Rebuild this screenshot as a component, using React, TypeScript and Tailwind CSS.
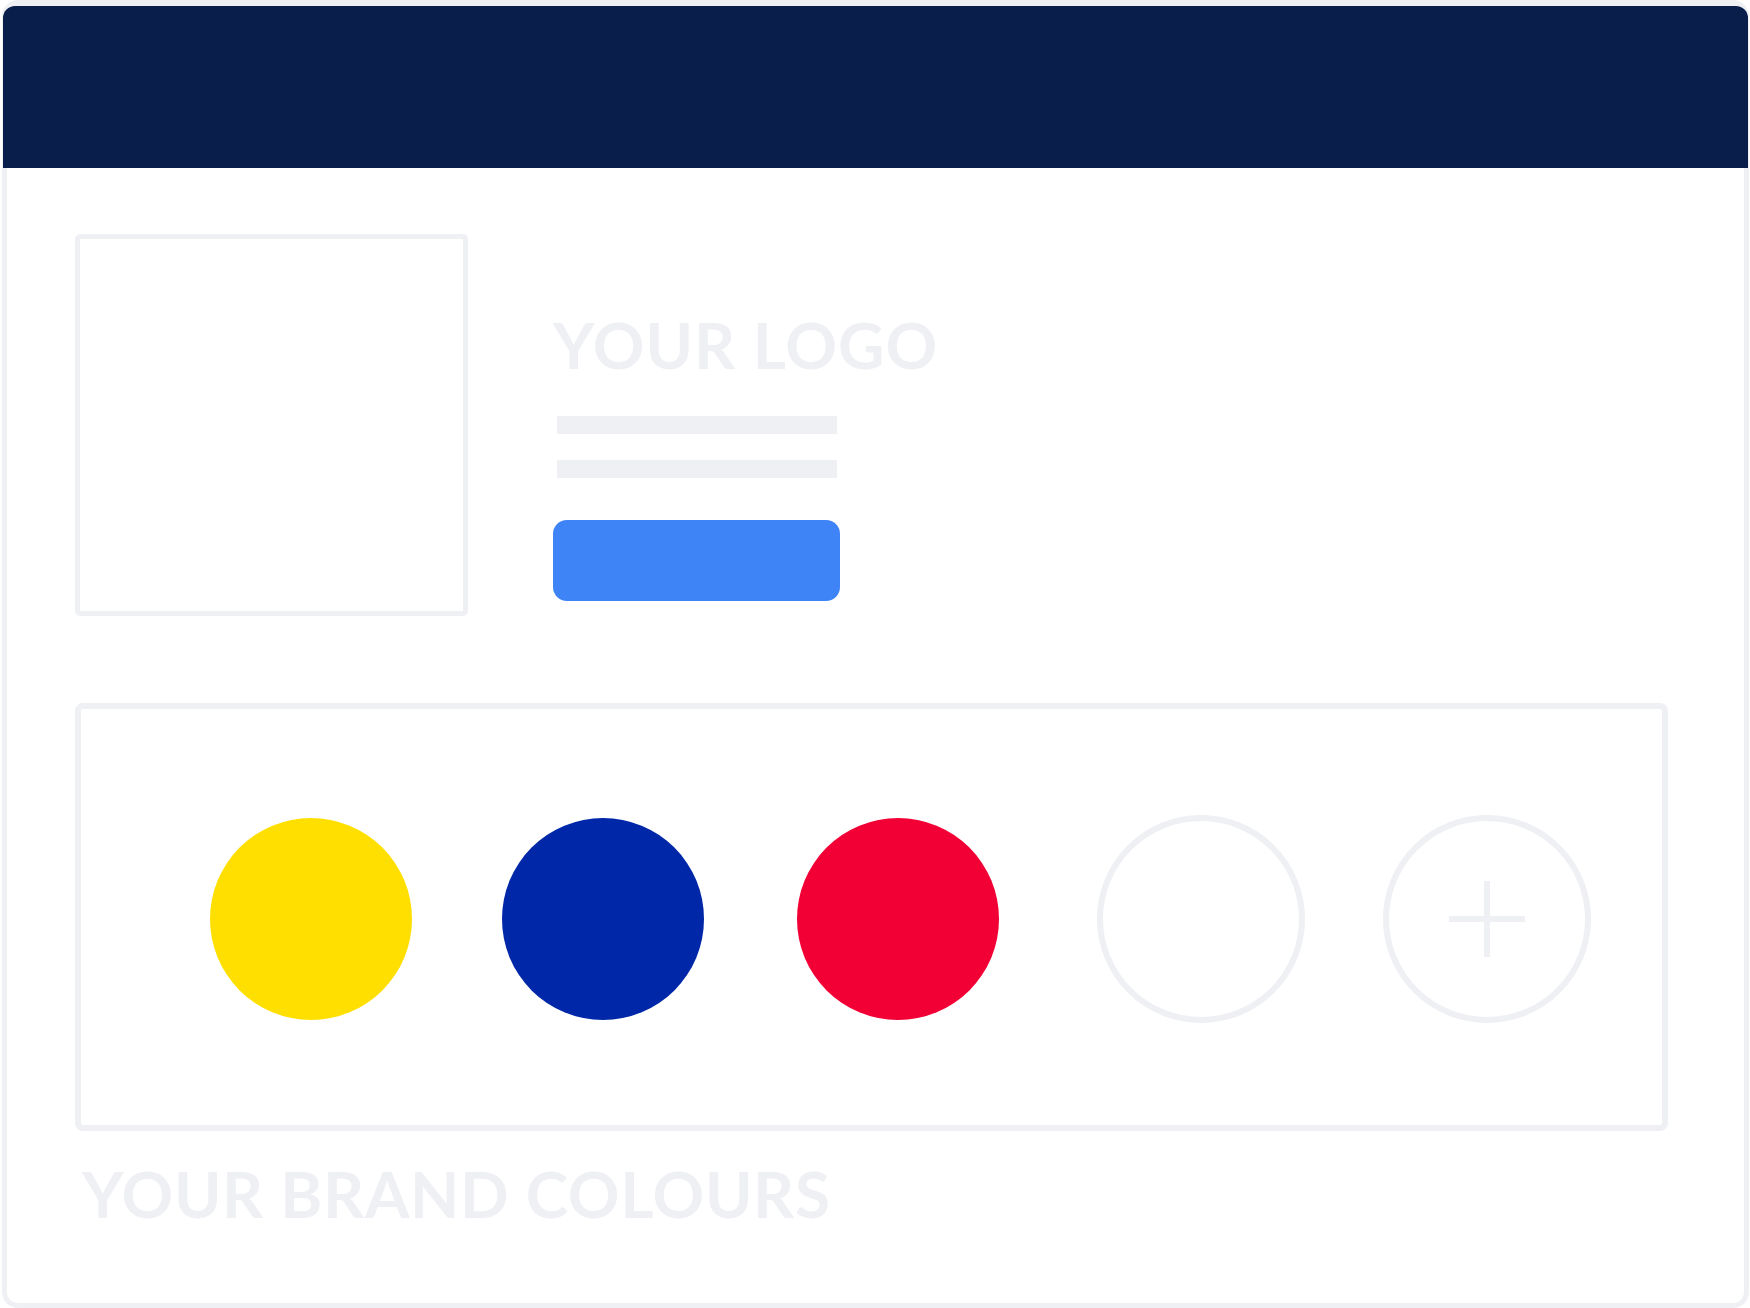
import React from 'react';

const swatches = [
  { key: 'yellow', className: 'ml-[129px] w-[202px] h-[202px] rounded-full bg-[#ffdf00]' },
  { key: 'blue', className: 'ml-[90px] w-[202px] h-[202px] rounded-full bg-[#0027a8]' },
  { key: 'red', className: 'ml-[93px] w-[202px] h-[202px] rounded-full bg-[#f20035]' },
  { key: 'empty', className: 'ml-[98px] w-[208px] h-[208px] rounded-full border-[6px] border-[#eff0f4]' },
];

function AddSwatch() {
  return (
    <div className="ml-[78px] w-[208px] h-[208px] rounded-full border-[6px] border-[#eff0f4] flex items-center justify-center">
      <svg width="76" height="76" viewBox="0 0 76 76">
        <rect x="0" y="35" width="76" height="6" fill="#eff0f4" />
        <rect x="35" y="0" width="6" height="76" fill="#eff0f4" />
      </svg>
    </div>
  );
}

export default function App() {
  return (
    <div className="w-[1750px] h-[1308px] bg-white pl-[2px] pr-[1px] font-['Lato','Liberation_Sans',sans-serif]">
      <div className="h-full rounded-[16px] border-[5px] border-t-[6px] border-[#eff0f4] bg-white flex flex-col">
        {/* header bar */}
        <div className="-mx-[4px] h-[162px] rounded-t-[12px] bg-[#0a1e4c]" />

        <div className="pl-[68px] pt-[66px] flex flex-col">
          {/* logo row */}
          <div className="flex">
            <div className="w-[393px] h-[382px] rounded-[5px] border-[5px] border-[#eff0f4]" />
            <div className="ml-[85px] pt-[79px] flex flex-col">
              <h1 className="text-[64px] leading-[64px] font-bold tracking-[1px] text-[#eff0f4]">YOUR LOGO</h1>
              <div className="mt-[39px] ml-[4px] w-[280px] h-[18px] bg-[#eff0f4]" />
              <div className="mt-[26px] ml-[4px] w-[280px] h-[18px] bg-[#eff0f4]" />
              <button className="mt-[42px] w-[287px] h-[81px] rounded-[14px] bg-[#3e84f6]" />
            </div>
          </div>

          {/* brand colours */}
          <div className="mt-[87px] w-[1593px] h-[428px] pt-[4px] rounded-[8px] border-[6px] border-[#eff0f4] flex items-center">
            {swatches.map(s => (
              <div key={s.key} className={s.className} />
            ))}
            <AddSwatch />
          </div>
          <h2 className="mt-[31px] ml-[7px] text-[64px] leading-[64px] font-bold tracking-[0.7px] text-[#eff0f4]">
            YOUR BRAND COLOURS
          </h2>
        </div>
      </div>
    </div>
  );
}
